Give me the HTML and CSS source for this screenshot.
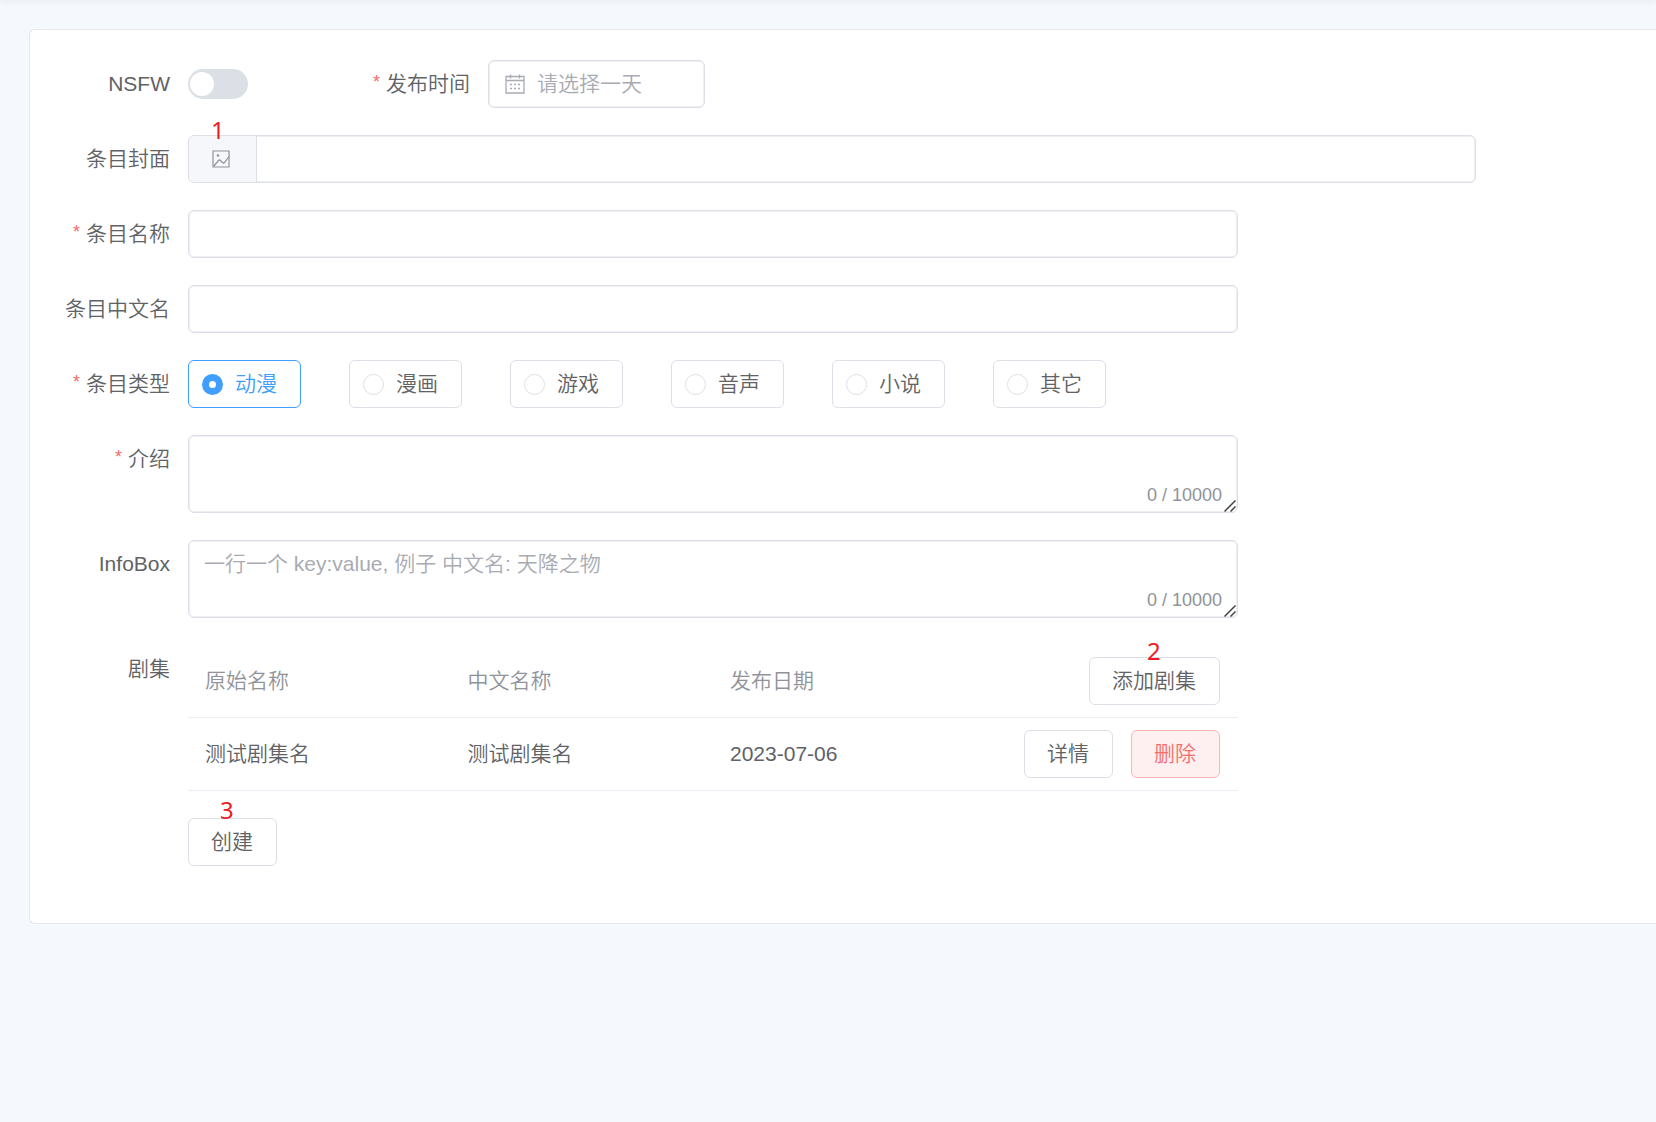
FILE: index.html
```html
<!DOCTYPE html>
<html lang="zh-CN">
<head>
<meta charset="utf-8">
<meta name="viewport" content="width=device-width, initial-scale=1">
<title>创建条目</title>
<link rel="stylesheet" href="styles.css">
</head>
<body>
<header class="topbar"></header>
<main class="card">
  <form class="form">
    <div class="form-row">
      <div class="item item-switch">
        <label class="label" for="nsfw">NSFW</label>
        <div class="content content-switch"><input class="switch" type="checkbox" role="switch" id="nsfw"></div>
      </div>
      <div class="item">
        <label class="label required" for="date">发布时间</label>
        <div class="content field date-field">
          <svg class="icon-date" viewBox="0 0 20 20" aria-hidden="true"><g fill="none" stroke="currentColor"><path d="M1 2.500h18v16.500H1zM1 6.500h18" stroke-width="1.300"/><path d="M5.500 .5v4M14.500 .5v4" stroke-width="1.300"/><path d="M5 10.500h2M9 10.500h2M13 10.500h2M5 14.500h2M9 14.500h2M13 14.500h2" stroke-width="1.300"/></g></svg>
          <input class="bare-input" id="date" type="text" placeholder="请选择一天">
        </div>
      </div>
    </div>

    <div class="item item-wide">
      <label class="label" for="cover">条目封面</label>
      <div class="content field">
        <div class="prepend">
          <button class="pick" type="button" aria-label="选择图片">
            <svg class="icon-picture" viewBox="0 0 18 18" aria-hidden="true"><g fill="none" stroke="currentColor" stroke-width="1.2"><path d="M1 1h16v16H1z"/><path d="M1.500 16.500L6.500 10.500Q7.500 9.500 8.500 10.500L10.500 12.500Q11.500 13.500 12.500 12.500L17 6.500"/></g><circle cx="6" cy="5.500" r="1.300" fill="currentColor"/></svg>
          </button>
          <span class="mark mark-cover">1</span>
        </div>
        <input class="bare-input" id="cover" type="text">
      </div>
    </div>

    <div class="item">
      <label class="label required" for="name">条目名称</label>
      <div class="content field"><input class="bare-input" id="name" type="text"></div>
    </div>

    <div class="item">
      <label class="label" for="name-cn">条目中文名</label>
      <div class="content field"><input class="bare-input" id="name-cn" type="text"></div>
    </div>

    <div class="item" role="radiogroup" aria-labelledby="type-label">
      <span class="label required" id="type-label">条目类型</span>
      <div class="content radios">
        <label class="radio"><input type="radio" name="type" checked>动漫</label>
        <label class="radio"><input type="radio" name="type">漫画</label>
        <label class="radio"><input type="radio" name="type">游戏</label>
        <label class="radio"><input type="radio" name="type">音声</label>
        <label class="radio"><input type="radio" name="type">小说</label>
        <label class="radio"><input type="radio" name="type">其它</label>
      </div>
    </div>

    <div class="item">
      <label class="label required" for="intro">介绍</label>
      <div class="content area">
        <textarea class="textarea" id="intro"></textarea>
        <span class="count">0 / 10000</span>
        <svg class="grip" viewBox="0 0 12 12" aria-hidden="true"><path d="M.5 11.500L11.500.5M6.500 11.500L11.500 6.500"/></svg>
      </div>
    </div>

    <div class="item">
      <label class="label" for="infobox">InfoBox</label>
      <div class="content area">
        <textarea class="textarea" id="infobox" placeholder="一行一个 key:value, 例子 中文名: 天降之物"></textarea>
        <span class="count">0 / 10000</span>
        <svg class="grip" viewBox="0 0 12 12" aria-hidden="true"><path d="M.5 11.500L11.500.5M6.500 11.500L11.500 6.500"/></svg>
      </div>
    </div>

    <div class="item">
      <span class="label" id="episodes-label">剧集</span>
      <div class="content">
        <table class="table" aria-labelledby="episodes-label">
          <thead>
            <tr>
              <th>原始名称</th>
              <th>中文名称</th>
              <th>发布日期</th>
              <th><div class="actions"><span class="marked"><button class="btn" type="button">添加剧集</button><span class="mark mark-add">2</span></span></div></th>
            </tr>
          </thead>
          <tbody>
            <tr>
              <td>测试剧集名</td>
              <td>测试剧集名</td>
              <td>2023-07-06</td>
              <td><div class="actions"><button class="btn" type="button">详情</button><button class="btn btn-danger" type="button">删除</button></div></td>
            </tr>
          </tbody>
        </table>
      </div>
    </div>

    <div class="item item-submit">
      <span class="marked"><button class="btn" type="submit">创建</button><span class="mark mark-create">3</span></span>
    </div>
  </form>
</main>
</body>
</html>
```
FILE: styles.css
```css
* {
  box-sizing: border-box;
}

:root {
  --text: #606266;
  --muted: #909399;
  --placeholder: #a8abb2;
  --border: #dcdfe6;
  --line: #ebeef5;
  --primary: #409eff;
  --danger: #f56c6c;
}

body {
  margin: 0;
  min-height: 100vh;
  background: #f5f8fd;
  color: var(--text);
  font: 350 21px/48px "Liberation Sans", "Noto Sans CJK SC", sans-serif;
}

input,
textarea,
button {
  margin: 0;
  font: inherit;
  color: inherit;
}

.topbar {
  height: 0;
  box-shadow: 0 0 6px 1px rgba(0, 0, 0, 0.12);
}

.card {
  margin: 29px 0 0 29px;
  padding: 30px;
  border: 1px solid #e4e7ed;
  border-right: 0;
  border-radius: 6px 0 0 6px;
  background: #fff;
}

.form-row {
  display: flex;
}

.item {
  display: flex;
  align-items: flex-start;
  max-width: 1178px;
  margin-bottom: 27px;
}

.item-wide {
  max-width: 1416px;
}

.item-switch {
  flex: 0 0 300px;
}

.item-submit {
  padding-left: 128px;
}

.label {
  flex: 0 0 128px;
  padding-right: 18px;
  text-align: right;
  white-space: nowrap;
}

.required::before {
  content: "*";
  margin-right: 6px;
  color: var(--danger);
  font-size: 18px;
  line-height: 21px;
  vertical-align: 3px;
}

.content {
  flex: 1;
  min-width: 0;
}

.content-switch {
  display: flex;
  align-items: center;
  height: 48px;
}

.switch {
  appearance: none;
  display: flex;
  align-items: center;
  width: 60px;
  height: 30px;
  padding: 2px;
  border-radius: 15px;
  background: var(--border);
}

.switch::before {
  content: "";
  width: 24px;
  height: 24px;
  border-radius: 50%;
  background: #fff;
}

.switch:checked {
  justify-content: flex-end;
  background: var(--primary);
}

.field {
  display: flex;
  align-items: center;
  height: 48px;
  border: 1px solid var(--border);
  border-radius: 6px;
  box-shadow: inset 0 0 0 1px #eeeff3;
}

.date-field {
  flex: 0 0 217px;
  gap: 12px;
  padding: 0 16px;
}

.icon-date {
  flex: none;
  width: 20px;
  height: 20px;
  color: var(--placeholder);
}

.bare-input {
  flex: 1;
  min-width: 0;
  height: 46px;
  padding: 0;
  border: 0;
  outline: 0;
  background: none;
}

::placeholder {
  color: var(--placeholder);
  opacity: 1;
}

.prepend {
  position: relative;
  align-self: stretch;
  width: 68px;
  border-right: 1px solid var(--border);
  border-radius: 5px 0 0 5px;
  background: #f5f7fa;
}

.pick {
  display: flex;
  align-items: center;
  justify-content: center;
  width: 100%;
  height: 100%;
  padding: 0 3px 1px 0;
  border: 0;
  background: none;
  color: var(--muted);
}

.icon-picture {
  width: 18px;
  height: 18px;
}

.radios {
  display: flex;
  flex-wrap: wrap;
  gap: 27px 48px;
}

.radio {
  display: flex;
  align-items: center;
  gap: 12px;
  height: 48px;
  padding: 0 23px 0 13px;
  border: 1px solid var(--border);
  border-radius: 6px;
}

.radio input {
  appearance: none;
  width: 21px;
  height: 21px;
  border: 1px solid var(--border);
  border-radius: 50%;
  background: #fff;
}

.radio:has(:checked) {
  border-color: var(--primary);
  color: var(--primary);
}

.radio input:checked {
  border: 7px solid var(--primary);
}

.area {
  position: relative;
  height: 78px;
}

.textarea {
  display: block;
  width: 100%;
  height: 100%;
  padding: 7px 15px;
  border: 1px solid var(--border);
  border-radius: 6px;
  outline: 0;
  box-shadow: inset 0 0 0 1px #eeeff3;
  line-height: 32px;
  resize: none;
}

.count {
  position: absolute;
  right: 16px;
  bottom: 7px;
  color: var(--muted);
  font-size: 18px;
  line-height: 21px;
}

.grip {
  position: absolute;
  right: 2px;
  bottom: 1px;
  width: 12px;
  height: 12px;
  fill: none;
  stroke: #444;
  stroke-width: 1.5;
}

.table {
  width: 100%;
  table-layout: fixed;
  border-collapse: separate;
  border-spacing: 0;
}

.table th,
.table td {
  height: 73px;
  padding: 0 18px 0 17px;
  border-bottom: 1px solid var(--line);
  font-weight: inherit;
  text-align: left;
  white-space: nowrap;
}

.table th {
  color: var(--muted);
}

.actions {
  display: flex;
  justify-content: flex-end;
  gap: 18px;
}

.btn {
  display: block;
  height: 48px;
  padding: 0 23px 0 22px;
  border: 1px solid var(--border);
  border-radius: 6px;
  background: #fff;
  color: var(--text);
  line-height: 46px;
}

.btn-danger {
  border-color: #fab6b6;
  background: #fef0f0;
  color: var(--danger);
}

.marked {
  position: relative;
}

/* Numbered step markers that sit over the top edge of a control */
.mark {
  position: absolute;
  top: -18px;
  color: #ed1c24;
  font: 400 24px/24px "Noto Sans", sans-serif;
  pointer-events: none;
}

.mark-cover {
  left: 22px;
}

.mark-add {
  left: 58px;
}

.mark-create {
  top: -20px;
  left: 32px;
}
```
